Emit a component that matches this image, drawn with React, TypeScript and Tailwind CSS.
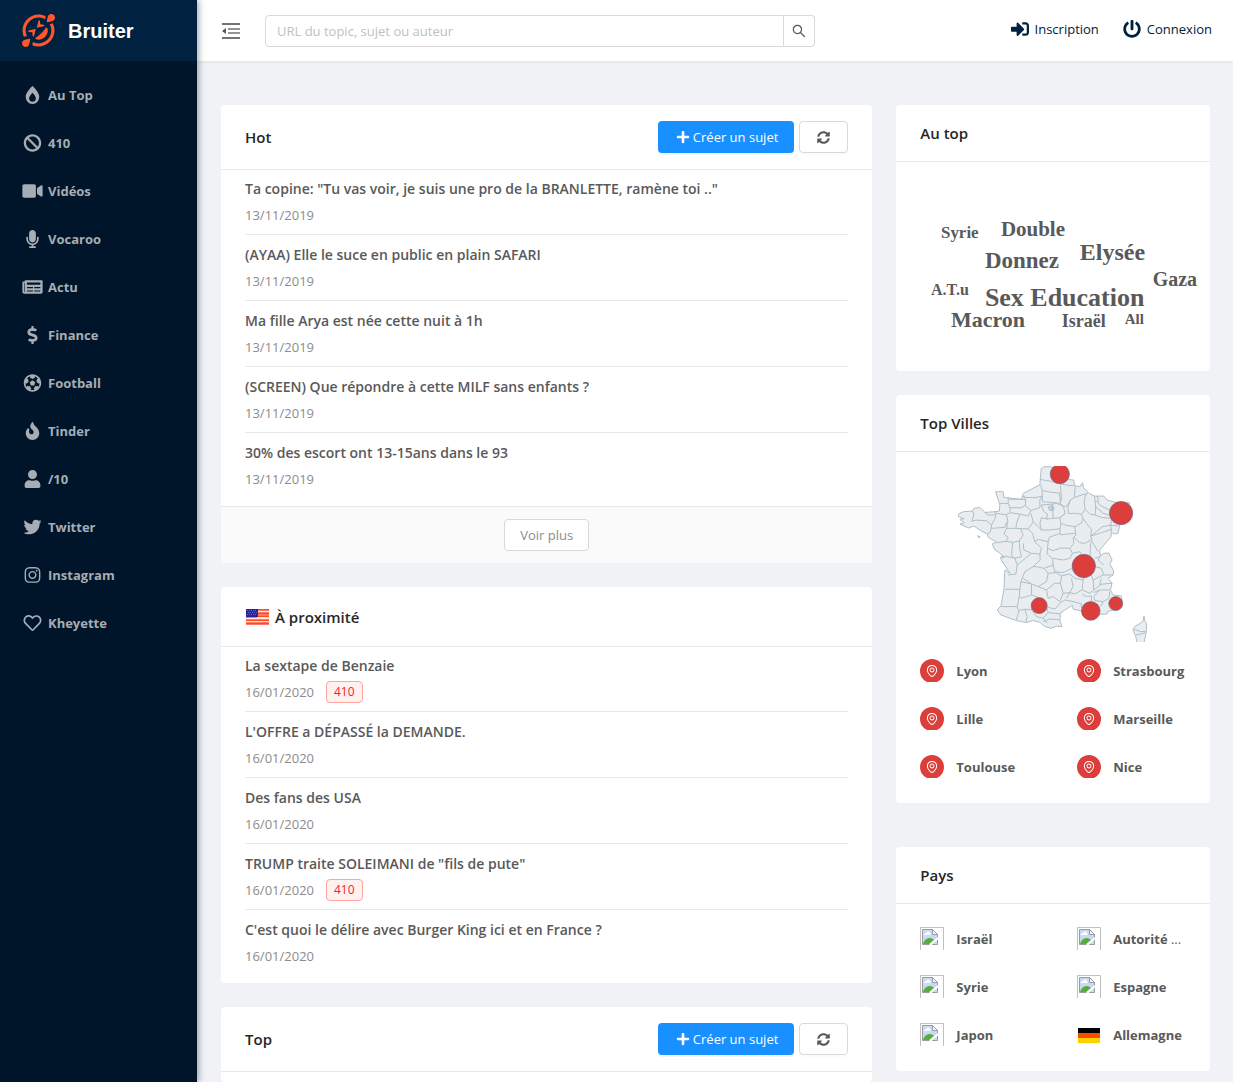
import React from "react";
import {
  FaBan,
  FaBurn,
  FaDollarSign,
  FaFire,
  FaFutbol,
  FaInstagram,
  FaMicrophone,
  FaNewspaper,
  FaPlus,
  FaPowerOff,
  FaRegGrinSquintTears,
  FaRegHeart,
  FaSignInAlt,
  FaSyncAlt,
  FaTwitter,
  FaUser,
  FaVideo,
} from "react-icons/fa";
import { AiOutlineEnvironment, AiOutlineSearch } from "react-icons/ai";
import type { IconType } from "react-icons";

interface MenuEntry {
  title: string;
  icon: IconType;
}

interface Topic {
  title: string;
  date: string;
  tag?: string;
}

const menu: MenuEntry[] = [
  { title: "Au Top", icon: FaBurn },
  { title: "410", icon: FaBan },
  { title: "Vidéos", icon: FaVideo },
  { title: "Vocaroo", icon: FaMicrophone },
  { title: "Actu", icon: FaNewspaper },
  { title: "Finance", icon: FaDollarSign },
  { title: "Football", icon: FaFutbol },
  { title: "Tinder", icon: FaFire },
  { title: "/10", icon: FaUser },
  { title: "Twitter", icon: FaTwitter },
  { title: "Instagram", icon: FaInstagram },
  { title: "Kheyette", icon: FaRegHeart },
];

const hotTopics: Topic[] = [
  {
    title:
      'Ta copine: "Tu vas voir, je suis une pro de la BRANLETTE, ramène toi .."',
    date: "13/11/2019",
  },
  { title: "(AYAA) Elle le suce en public en plain SAFARI", date: "13/11/2019" },
  { title: "Ma fille Arya est née cette nuit à 1h", date: "13/11/2019" },
  {
    title: "(SCREEN) Que répondre à cette MILF sans enfants ?",
    date: "13/11/2019",
  },
  { title: "30% des escort ont 13-15ans dans le 93", date: "13/11/2019" },
];

const nearTopics: Topic[] = [
  { title: "La sextape de Benzaie", date: "16/01/2020", tag: "410" },
  { title: "L'OFFRE a DÉPASSÉ la DEMANDE.", date: "16/01/2020" },
  { title: "Des fans des USA", date: "16/01/2020" },
  {
    title: 'TRUMP traite SOLEIMANI de "fils de pute"',
    date: "16/01/2020",
    tag: "410",
  },
  {
    title: "C'est quoi le délire avec Burger King ici et en France ?",
    date: "16/01/2020",
  },
];

const words = [
  { text: "Syrie", x: 45, y: 76, size: 17 },
  { text: "Double", x: 105, y: 74, size: 21 },
  { text: "Donnez", x: 89, y: 106, size: 23 },
  { text: "Elysée", x: 184, y: 98, size: 24 },
  { text: "Gaza", x: 257, y: 124, size: 20 },
  { text: "A.T.u", x: 35, y: 133, size: 16 },
  { text: "Sex Education", x: 89, y: 144, size: 26 },
  { text: "Macron", x: 55, y: 165, size: 22 },
  { text: "Israël", x: 166, y: 165, size: 18 },
  { text: "All", x: 229, y: 162, size: 15 },
];

const cities = ["Lyon", "Strasbourg", "Lille", "Marseille", "Toulouse", "Nice"];

const cityMarks = [
  { cx: 480, cy: 72, r: 29 },
  { cx: 664, cy: 189, r: 35 },
  { cx: 552, cy: 348, r: 35 },
  { cx: 418, cy: 467, r: 24 },
  { cx: 573, cy: 483, r: 28 },
  { cx: 648, cy: 461, r: 21 },
];

const countries = ["Israël", "Autorité", "Syrie", "Espagne", "Japon", "Allemagne"];

// Department borders
const borders = [
  "M420 88 L450 93 L478 101 L505 106 L522 106",
  "M422 104 L427 121 L450 126 L480 129",
  "M370 138 L378 142 L405 143 L427 138 L427 121",
  "M427 138 L428 155 L455 157 L479 160 L485 150 L482 106",
  "M325 142 L330 148 L365 147 L378 150 L370 138",
  "M300 160 L325 160 L330 173 L365 173 L376 166 L378 150",
  "M325 142 L325 160",
  "M376 166 L393 181 L420 173 L420 150 L427 138",
  "M330 173 L331 188 L360 192 L385 198 L393 181",
  "M424 165 L432 185 L443 192 L440 207 L460 205 L458 162 L424 165",
  "M445 170 L455 167 L463 172 L460 181 L449 181 Z",
  "M449 174 L462 174 M454 168 L454 180",
  "M458 162 L470 160 L490 168 L496 190 L480 203 L460 205",
  "M479 129 L482 160 L490 168 L500 170 L512 150 L524 142 L526 108",
  "M524 142 L545 135 L565 130",
  "M512 150 L505 168 L505 190 L530 190 L545 193 L556 178 L553 155 L558 133",
  "M556 178 L570 192 L586 195 L588 170 L584 138",
  "M588 150 L600 165 L630 181 M592 138 L597 155",
  "M586 195 L605 202 L635 205 M588 170 L610 190 L630 195",
  "M496 190 L480 203 L483 220 L500 226 L525 230 L545 219 L550 205 L545 193",
  "M550 205 L560 220 L575 238 L573 258 L590 245 L608 230 L635 225",
  "M635 205 L633 225 L655 228 M633 225 L635 245",
  "M573 258 L605 248 L635 238 M573 258 L577 275 L595 305",
  "M525 230 L528 255 L522 262 L540 278 L555 280 L573 270",
  "M483 220 L480 240 L482 255 L500 252 L525 250",
  "M443 207 L425 203 L420 220 L425 240 L450 240 L480 236",
  "M360 192 L350 220 L348 235 L385 237 L400 215 L393 190",
  "M400 215 L425 240 M331 188 L318 194 L288 190",
  "M320 194 L324 215 L320 235 L348 235",
  "M285 185 L288 200 L275 225 L274 235 L315 232 L320 215",
  "M275 225 L260 212 L228 210 L215 214 L222 195 L218 183",
  "M255 187 L265 195 L285 195",
  "M274 235 L270 248 L262 252",
  "M320 235 L312 252 L325 262 L318 274 L290 278",
  "M318 274 L340 277 L358 273 L370 255 L362 236",
  "M385 237 L398 250 L405 275 L415 268 L445 275 L448 262 L480 250",
  "M445 275 L443 295 L460 302 L482 294 L510 295 L522 280 L520 262",
  "M358 273 L360 300 L365 320 L345 325 L335 316 L338 278",
  "M370 280 L372 300 L395 310 L420 312 L425 295 L405 275",
  "M315 318 L345 325 L352 345 L370 330 L395 310",
  "M352 345 L348 372 L325 375",
  "M420 312 L421 330 L400 350 L375 365 L363 395 L360 418 L315 418",
  "M443 295 L442 312 L458 325 L460 345 L432 355 L410 350 L400 350",
  "M460 325 L490 330 L510 325 L518 310 L510 295",
  "M460 345 L465 365 L490 368 L516 355",
  "M432 355 L445 370 L440 395 L415 410 L395 402 L370 385",
  "M445 370 L470 368 L485 378 L482 400 L465 400 L440 420 L415 410",
  "M485 378 L510 372 L525 385 L550 390 L555 381",
  "M482 400 L490 430 L510 428 L520 410 L515 385",
  "M550 390 L547 420 L525 432 L510 428",
  "M574 375 L580 390 L582 420 L570 430 L547 420",
  "M586 350 L605 355 L612 375 L640 375 M612 345 L595 330 L602 318",
  "M580 390 L600 380 L612 375 M605 385 L600 403 L637 400 M582 420 L605 403",
  "M582 428 L600 420 L632 420 M600 420 L582 440 L585 452 L610 455 L628 445 L630 425",
  "M547 432 L560 440 L575 438 L575 455 M610 455 L603 470",
  "M490 430 L480 455 L460 440 L445 445 L440 420",
  "M480 460 L495 450 L520 455 L545 462 L545 475 M510 428 L500 445",
  "M360 418 L358 440 L365 445 L395 435 L415 442",
  "M358 440 L352 470 L303 470 M352 470 L357 482 L350 510",
  "M357 482 L375 478 L395 480 L398 455 M375 478 L382 500 L378 516",
  "M395 480 L410 500 L430 505 L445 488 L482 492 M445 488 L440 470 L465 478 L480 460",
  "M430 515 L450 507 L480 510 M430 505 L442 520",
  "M395 402 L395 435 M363 395 L395 402",
  "M518 310 L540 305 L545 312 M571 318 L572 280 L577 275 M585 325 L600 320",
  "M703 538 L722 545 L738 545 M708 555 L725 552 L738 548",
];

const FranceMap = () => (
  <svg
    viewBox="60 48 798 528"
    className="block h-44 w-full"
    role="img"
    aria-label="France"
  >
    <g fill="#e9edf0" stroke="#afbec8" strokeWidth="3" strokeLinejoin="round">
      <path d="M424 56 L432 50 L455 50 L480 80 L505 88 L522 90 L524 106 L540 110 L548 98 L551 112 L568 130 L584 138 L592 138 L612 138 L622 150 L640 155 L665 160 L690 158 L676 185 L660 225 L655 250 L643 252 L635 246 L634 260 L615 282 L600 300 L602 318 L612 310 L627 309 L637 330 L630 342 L642 362 L640 375 L625 385 L637 400 L632 420 L640 435 L665 438 L667 452 L650 478 L625 484 L622 492 L603 493 L570 482 L545 483 L520 478 L518 466 L495 480 L482 490 L480 510 L486 530 L470 529 L455 535 L435 530 L420 517 L398 512 L380 518 L350 512 L330 505 L303 495 L292 480 L303 468 L312 420 L315 360 L330 370 L316 348 L305 332 L302 322 L315 322 L298 308 L285 300 L277 282 L290 276 L265 262 L262 252 L240 240 L222 228 L205 234 L180 222 L193 218 L180 208 L193 206 L176 200 L175 192 L190 185 L218 183 L222 175 L240 172 L255 187 L285 185 L298 183 L300 165 L287 125 L310 125 L312 142 L365 148 L370 130 L420 104 L422 80 Z" />
      <path d="M733 498 L736 515 L741 522 L739 550 L733 578 L712 578 L708 560 L700 540 L705 530 L722 520 L730 514 Z" />
      <path d="M233 257 L240 260 L237 264 Z" />
      <path d="M303 320 L311 320 M305 335 L312 340" />
      {borders.map((d) => (
        <path key={d} d={d} fill="none" />
      ))}
    </g>
    <g fill="#dc3e3b" stroke="#66688c" strokeWidth="2">
      {cityMarks.map((mark) => (
        <circle key={`${mark.cx}-${mark.cy}`} {...mark} />
      ))}
    </g>
  </svg>
);

const FoldIcon = () => (
  <svg viewBox="0 0 18 16" className="h-4 w-[18px]" aria-hidden="true">
    <path stroke="#737373" strokeWidth="2" d="M0 1h18M0 15h18" />
    <path stroke="#737373" strokeWidth="1.4" d="M6 6h12M6 10h12" />
    <path fill="#595959" d="M4 5v6L0 8z" />
  </svg>
);

const UsFlag = () => (
  <svg viewBox="0 0 24 17" className="h-[17px] w-6" aria-hidden="true">
    <path fill="#ff7a66" d="M1 1h23v16H1z" />
    <path
      stroke="#ff4b14"
      strokeWidth="1"
      d="M1 1.5h23M1 5.5h23M1 8.5h23M1 12.5h23M1 15.5h23"
    />
    <path stroke="#ffe3dc" strokeWidth="1" d="M12 3.5h12M12 9.5h12M1 10.5h23M1 13.5h23" />
    <path fill="#27219b" d="M1 1h12v8H1z" />
    <path
      stroke="#6663bd"
      strokeWidth="1"
      strokeDasharray="1 1"
      d="M2 2.500h10M3 4.500h9M2 6.500h10"
    />
  </svg>
);

const GermanFlag = () => (
  <svg viewBox="0 0 24 24" className="size-6" aria-hidden="true">
    <path fill="#000" d="M1 5h22v5H1z" />
    <path fill="#ff4b00" d="M1 10h22v5H1z" />
    <path fill="#ffd000" d="M1 15h22v5H1z" />
  </svg>
);

const MissingImage = () => (
  <svg viewBox="0 0 24 23" className="h-[23px] w-6" aria-hidden="true">
    <path fill="none" stroke="#c0c0c0" d="M.5 23V.5h23V23" />
    <path fill="#c6d9f7" stroke="#9b9b9b" d="M2.5 2.5h10l5 5v10h-15z" />
    <path fill="#fff" d="M4 8c0-2 2-2 2.500-2C7 4 10 4 10 6.500c1 0 1 1.500 0 1.500z" />
    <path fill="#58ad3c" d="M3 17c1-4 4-6 7-6 2 0 3 1 4 2l-5 4z" />
    <path fill="#fff" stroke="#9b9b9b" d="M12.5 2.5v5h5z" />
    <path stroke="#fff" strokeWidth="2" d="M10 18l8-7" />
  </svg>
);

const CreateButton = () => (
  <button className="flex h-8 items-center gap-[3px] rounded bg-[#1890ff] pr-4 pl-[18px] text-[13px] text-white shadow-[0_2px_0_rgba(0,0,0,0.045)] cursor-pointer">
    <FaPlus className="size-[14px]" />
    Créer un sujet
  </button>
);

const RefreshButton = () => (
  <button
    aria-label="Actualiser"
    className="flex h-8 w-[49px] items-center justify-center rounded border border-[#d9d9d9] bg-white text-[#595959] shadow-[0_2px_0_rgba(0,0,0,0.016)] cursor-pointer"
  >
    <FaSyncAlt className="size-[13px]" />
  </button>
);

const TopicList = ({ topics }: { topics: Topic[] }) => (
  <ul className="-mt-px px-6 pb-2">
    {topics.map((topic) => (
      <li
        key={topic.title}
        className="h-[66px] border-b border-[#e8e8e8] pt-[9px] last:h-[65px] last:border-b-0"
      >
        <a
          href="#"
          className="block truncate text-sm leading-[22px] font-[650] text-[#595959]"
        >
          {topic.title}
        </a>
        <div className="mt-1 flex h-[22px] items-center gap-3 text-[13px] text-[#8c8c8c]">
          {topic.date}
          {topic.tag && (
            <span className="rounded border border-[#ffa39e] bg-[#fff1f0] px-[7px] text-xs leading-5 text-[#f5222d]">
              {topic.tag}
            </span>
          )}
        </div>
      </li>
    ))}
  </ul>
);

const SideCard = ({
  title,
  className = "",
  children,
}: {
  title: string;
  className?: string;
  children: React.ReactNode;
}) => (
  <section className={`rounded-sm bg-white ${className}`}>
    <h2 className="border-b border-[#e8e8e8] px-6 py-4 text-[15px] leading-6 font-semibold text-[#262626]">
      {title}
    </h2>
    {children}
  </section>
);

const App = () => {
  return (
    <div className="flex min-h-screen bg-[#f0f2f5] font-['Open_Sans','Noto_Sans',sans-serif] leading-[22px]">
      {/* Sidebar */}
      <aside className="z-10 w-[197px] shrink-0 bg-[#001529] shadow-[2px_0_6px_rgba(0,21,41,0.35)]">
        <a
          href="#"
          className="flex h-[61px] items-center gap-[13px] bg-[#002140] pl-[22px]"
        >
          <FaRegGrinSquintTears className="size-[33px] text-[#ff562b]" />
          <span className="font-['Liberation_Sans',sans-serif] text-xl font-bold text-white">
            Bruiter
          </span>
        </a>
        <nav className="flex flex-col gap-2 pt-[14px]">
          {menu.map(({ title, icon: Icon }) => (
            <a
              key={title}
              href="#"
              className="flex h-10 items-center gap-1 pl-5 text-[13px] font-bold text-[#a6adb4]"
            >
              <span className="flex w-6 justify-center">
                <Icon className="h-[18px] w-[21px]" />
              </span>
              {title}
            </a>
          ))}
        </nav>
      </aside>

      <div className="flex min-w-0 flex-1 flex-col">
        {/* Top bar */}
        <header className="flex h-[61px] shrink-0 items-center bg-white pr-[21px] pl-[25px] shadow-[0_1px_4px_rgba(0,21,41,0.08)]">
          <button aria-label="Menu" className="cursor-pointer">
            <FoldIcon />
          </button>
          <form className="ml-[25px] flex h-8 max-w-[550px] flex-1">
            <input
              type="text"
              aria-label="Recherche"
              placeholder="URL du topic, sujet ou auteur"
              className="min-w-0 flex-1 rounded-l border border-[#d9d9d9] px-[11px] text-[13px] placeholder:text-[#bfbfbf]"
            />
            <button
              type="button"
              aria-label="Rechercher"
              className="flex w-[31px] items-center justify-center rounded-r border border-l-0 border-[#d9d9d9] text-[#595959] cursor-pointer"
            >
              <AiOutlineSearch className="size-4" />
            </button>
          </form>
          <div className="ml-auto flex gap-6 pb-1 text-[13px] text-[#002140]">
            <a href="#" className="flex items-center gap-[6px]">
              <FaSignInAlt className="size-[18px]" />
              Inscription
            </a>
            <a href="#" className="flex items-center gap-[6px]">
              <FaPowerOff className="size-[18px]" />
              Connexion
            </a>
          </div>
        </header>

        <main className="grid flex-1 grid-cols-3 gap-6 pt-11 pr-[23px] pl-6">
          <div className="col-span-2 flex flex-col gap-6">
            <section className="rounded-sm bg-white">
              <div className="flex h-[65px] items-center gap-[5px] border-b border-[#e8e8e8] px-6">
                <h2 className="mr-auto text-[15px] font-semibold text-[#262626]">
                  Hot
                </h2>
                <CreateButton />
                <RefreshButton />
              </div>
              <TopicList topics={hotTopics} />
              <div className="flex justify-center border-t border-[#e8e8e8] bg-[#fafafa] py-3">
                <button className="h-8 rounded border border-[#d9d9d9] bg-white px-[15px] text-[13px] text-[#8c8c8c] cursor-pointer">
                  Voir plus
                </button>
              </div>
            </section>

            <section className="rounded-sm bg-white">
              <div className="flex h-[60px] items-center gap-[6px] border-b border-[#e8e8e8] px-6">
                <UsFlag />
                <h2 className="text-[15px] font-semibold text-[#262626]">
                  À proximité
                </h2>
              </div>
              <TopicList topics={nearTopics} />
            </section>

            <section className="flex-1 rounded-sm bg-white">
              <div className="flex h-[65px] items-center gap-[5px] border-b border-[#e8e8e8] px-6">
                <h2 className="mr-auto text-[15px] font-semibold text-[#262626]">
                  Top
                </h2>
                <CreateButton />
                <RefreshButton />
              </div>
            </section>
          </div>

          <div className="flex flex-col gap-6">
            <SideCard title="Au top">
              <svg
                viewBox="0 0 314 209"
                className="block w-full fill-[#595959] font-['Liberation_Serif',serif] font-bold"
              >
                {words.map((word) => (
                  <text
                    key={word.text}
                    x={word.x}
                    y={word.y}
                    fontSize={word.size}
                  >
                    {word.text}
                  </text>
                ))}
              </svg>
            </SideCard>

            <SideCard title="Top Villes">
              <div className="px-6 pt-[14px]">
                <FranceMap />
              </div>
              <ul className="grid grid-cols-2 pt-[5px] pb-3">
                {cities.map((city) => (
                  <li key={city} className="flex h-12 items-center gap-3 pl-6">
                    <span className="h-[23px] shrink-0 overflow-hidden">
                      <span className="flex size-6 items-center justify-center rounded-full bg-[#dc3e3b] text-white">
                        <AiOutlineEnvironment className="size-[14px]" />
                      </span>
                    </span>
                    <a
                      href="#"
                      className="text-[13px] font-bold text-[#595959]"
                    >
                      {city}
                    </a>
                  </li>
                ))}
              </ul>
            </SideCard>

            <SideCard title="Pays" className="mt-5">
              <ul className="grid grid-cols-2 pt-[11px] pb-3">
                {countries.map((country) => (
                  <li
                    key={country}
                    className="flex h-12 items-center gap-3 pl-6"
                  >
                    {country === "Allemagne" ? <GermanFlag /> : <MissingImage />}
                    <a
                      href="#"
                      className="text-[13px] font-bold text-[#595959]"
                    >
                      {country}
                      {country === "Autorité" && (
                        <span className="font-normal"> ...</span>
                      )}
                    </a>
                  </li>
                ))}
              </ul>
            </SideCard>
          </div>
        </main>
      </div>
    </div>
  );
};

export default App;
